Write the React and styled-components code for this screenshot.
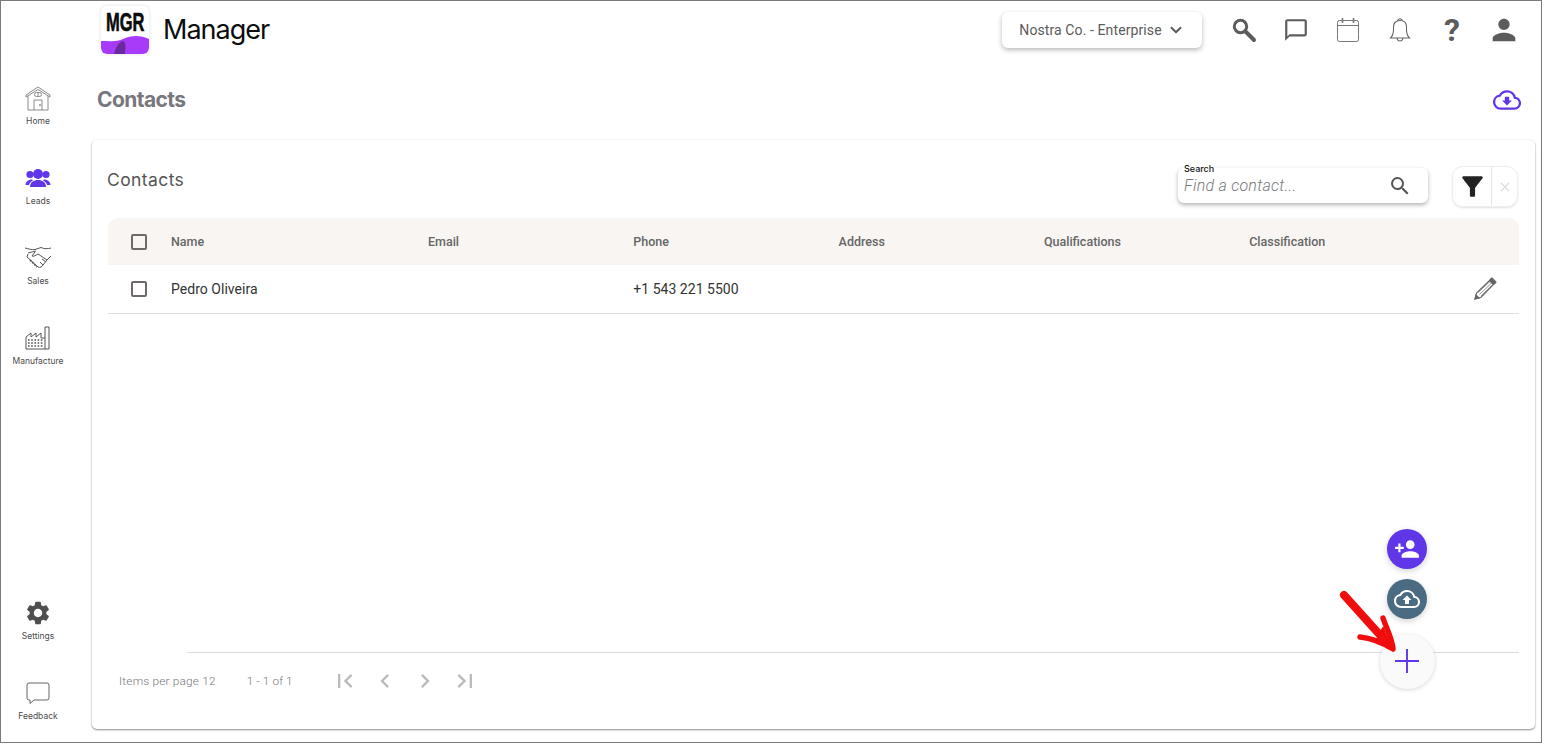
import React from 'react';
import styled, { createGlobalStyle } from 'styled-components';
import { ChevronDown } from 'lucide-react';
import {
  MdSettings, MdFilterAlt, MdClose, MdSearch, MdFirstPage, MdLastPage,
  MdChevronLeft, MdChevronRight, MdPerson,
  MdOutlineChatBubbleOutline, MdPersonAddAlt1,
} from 'react-icons/md';

const Global = createGlobalStyle`
  html, body { margin: 0; padding: 0; background: #fff; }
  body { font-family: Roboto, "Liberation Sans", sans-serif; overflow: hidden; }
  * { box-sizing: border-box; }
`;

const Frame = styled.div`
  position: relative;
  width: 1542px;
  height: 743px;
  border: 1px solid #7b7b7b;
  background: #fff;
  display: grid;
  grid-template-columns: 90px 1fr;
  overflow: hidden;
`;

const Sidebar = styled.nav`
  display: flex;
  flex-direction: column;
  justify-content: space-between;
  padding: 83px 0 20px;
`;

const NavGroup = styled.div`
  display: flex;
  flex-direction: column;
  gap: 37px;
`;

const NavItem = styled.div`
  width: 74px;
  height: 43px;
  display: flex;
  flex-direction: column;
  align-items: center;
  justify-content: space-between;
`;

const NavIcon = styled.div`
  height: 28px;
  display: flex;
  align-items: center;
  justify-content: center;
`;

const NavLabel = styled.span`
  font-family: Inter, "Liberation Sans", sans-serif;
  font-size: 8.5px;
  line-height: 12px;
  color: #4c4c4c;
  white-space: nowrap;
`;

const Main = styled.main`
  display: flex;
  flex-direction: column;
  min-width: 0;
`;

const Header = styled.header`
  height: 60px;
  display: flex;
  align-items: center;
  padding: 0 11px 2px 10px;
`;

const Logo = styled.div`
  width: 48px;
  height: 48px;
  border-radius: 6px;
  background: #fff;
  box-shadow: 0 0 4px rgba(0,0,0,.12);
  position: relative;
  overflow: hidden;
  display: flex;
  justify-content: center;
`;

const LogoText = styled.span`
  font-family: "Liberation Sans", sans-serif;
  font-weight: 700;
  font-size: 25px;
  line-height: 28px;
  margin: 2px 0 0 1px;
  color: #0c0c0c;
  -webkit-text-stroke: .6px #0c0c0c;
  transform: scaleX(.66);
`;

const LogoWave = styled.svg`
  position: absolute;
  left: 0;
  bottom: 0;
`;

const Brand = styled.span`
  font-family: Inter, "Liberation Sans", sans-serif;
  font-size: 27px;
  letter-spacing: -1px;
  color: #0c0c0c;
  margin: 0 0 1px 14px;
`;

const Spacer = styled.div`flex: 1;`;

const CompanySelect = styled.div`
  width: 200px;
  height: 36px;
  display: flex;
  align-items: center;
  justify-content: center;
  gap: 5px;
  border-radius: 6px;
  background: #fff;
  font-size: 14px;
  letter-spacing: .1px;
  color: #5b5b5b;
  box-shadow: 0 2px 5px rgba(0,0,0,.28);
`;

const HeaderIcons = styled.div`
  display: flex;
  align-items: center;
  margin-left: 16px;
  color: #5c5c5c;
`;

const HeaderIcon = styled.div`
  width: 52px;
  height: 36px;
  display: flex;
  align-items: center;
  justify-content: center;
`;

const QuestionGlyph = styled.span`
  font-family: Roboto, "Liberation Sans", sans-serif;
  font-size: 32px;
  font-weight: 700;
  line-height: 36px;
  color: #5c5c5c;
`;

const TitleRow = styled.div`
  height: 79px;
  display: flex;
  align-items: center;
  justify-content: space-between;
  padding: 0 20px 2px 6px;
`;

const PageTitle = styled.h1`
  margin: 0;
  font-family: Inter, "Liberation Sans", sans-serif;
  font-size: 21px;
  font-weight: 700;
  letter-spacing: -.6px;
  color: #77777d;
`;

const Card = styled.section`
  width: 1443px;
  height: 589px;
  margin-left: 1px;
  border-radius: 5px;
  background: #fff;
  box-shadow: 0 1px 2px rgba(0,0,0,.45), 0 0 2px rgba(0,0,0,.06);
  padding: 26px 16px 0;
  display: flex;
  flex-direction: column;
`;

const CardTop = styled.div`
  height: 52px;
  display: flex;
  align-items: flex-start;
`;

const CardTitle = styled.h2`
  margin: 3px 0 0 -1px;
  font-family: Inter, "Liberation Sans", sans-serif;
  font-size: 17.5px;
  font-weight: 400;
  line-height: 22px;
  letter-spacing: .4px;
  color: #555;
`;

const SearchBox = styled.div`
  position: relative;
  width: 250px;
  height: 35px;
  margin-top: 2px;
  border-radius: 6px;
  background: #fff;
  box-shadow: 0 2px 4px rgba(0,0,0,.3);
  display: flex;
  align-items: center;
  justify-content: space-between;
  padding: 0 16px 0 6px;
  color: #555;
`;

const SearchLabel = styled.span`
  position: absolute;
  top: -5px;
  left: 6px;
  font-family: Inter, "Liberation Sans", sans-serif;
  font-size: 9px;
  font-weight: 500;
  line-height: 11px;
  color: #111;
  background: #fff;
`;

const SearchHint = styled.span`
  font-size: 16px;
  font-style: italic;
  font-weight: 300;
  letter-spacing: .25px;
  color: #777;
`;

const FilterGroup = styled.div`
  width: 66px;
  height: 41px;
  margin-left: 24px;
  margin-right: 1px;
  border: 1px solid #eee;
  border-radius: 11px;
  box-shadow: 0 1px 2px rgba(0,0,0,.12);
  display: flex;
`;

const FilterCell = styled.div`
  flex: ${p => p.$grow || 1};
  display: flex;
  align-items: center;
  justify-content: center;
  color: ${p => p.$color};
  & + & { border-left: 1px solid #e6e6e6; }
`;

const Row = styled.div`
  height: ${p => p.$head ? 47 : 49}px;
  display: grid;
  grid-template-columns: 63px 257px repeat(5, 205.3px) 1fr;
  align-items: center;
  background: ${p => p.$head ? '#f8f5f2' : '#fff'};
  border-radius: ${p => p.$head ? '10px 10px 0 0' : 0};
  border-bottom: ${p => p.$head ? 'none' : '1px solid #dfdfdf'};
  line-height: 16px;
  color: ${p => p.$head ? '#666' : '#333'};
  font-weight: ${p => p.$head ? 500 : 400};
  font-size: ${p => p.$head ? '12.5px' : '14px'};
  letter-spacing: ${p => p.$head ? 0 : '.03px'};
`;

const Check = styled.span`
  display: block;
  width: 16px;
  height: 16px;
  margin-left: 23px;
  border: 2px solid #6f6a67;
  border-radius: 2px;
`;

const EditCell = styled.div`
  display: flex;
  justify-content: flex-end;
  padding-right: 22px;
  color: #666;
`;

const Grow = styled.div`flex: 1;`;

const Footer = styled.footer`
  margin-left: 79px;
  height: 77px;
  border-top: 1px solid #dcdcdc;
`;

const Pager = styled.div`
  margin-left: -68px;
  height: 56px;
  display: flex;
  align-items: center;
  font-size: 11.8px;
  font-weight: 300;
  letter-spacing: .2px;
  color: #777;
`;

const PageCount = styled.span`
  margin-left: 31px;
  letter-spacing: .1px;
`;

const PageButtons = styled.div`
  display: flex;
  margin-left: 32px;
  color: #bbb;
`;

const PageButton = styled.div`
  width: 40px;
  height: 24px;
  display: flex;
  align-items: center;
  justify-content: center;
`;

const Fab = styled.div`
  position: absolute;
  left: ${p => p.$x - p.$size / 2 - 1}px;
  top: ${p => p.$y - p.$size / 2 - 1}px;
  width: ${p => p.$size}px;
  height: ${p => p.$size}px;
  border-radius: 50%;
  background: ${p => p.$bg};
  color: ${p => p.$color};
  box-shadow: ${p => p.$soft ? '0 1px 4px rgba(0,0,0,.16)' : '0 2px 6px rgba(0,0,0,.18)'};
  display: flex;
  align-items: center;
  justify-content: center;
`;

const Mirrored = styled.span`
  display: flex;
  transform: scaleX(-1);
`;

const Arrow = styled.svg`
  position: absolute;
  left: 1335px;
  top: 587px;
`;

const House = () => (
  <svg width="26" height="26" viewBox="0 0 26 26" fill="none" stroke="#8a8a8a" strokeWidth="1">
    <path d="M1 10 L13 2 L25 10 V12 L13 4.5 L1 12 Z" />
    <path d="M3 11 V25 H23 V11" />
    <path d="M9 25 V15 H17 V25" />
    <rect x="9.5" y="7.5" width="7" height="4" rx="2" />
    <path d="M13 7.5 V11.5" />
    <circle cx="15" cy="20" r=".6" fill="#8a8a8a" />
  </svg>
);

const GroupIcon = () => (
  <svg width="26" height="20" viewBox="0 0 26 20" fill="#5f36e8">
    <circle cx="13" cy="6" r="5" />
    <circle cx="5" cy="6.5" r="3.6" />
    <circle cx="21" cy="6.5" r="3.6" />
    <path d="M5 19 C5 14 9 12 13 12 C17 12 21 14 21 19 Z" />
    <path d="M0.5 17 C0.5 14 3 11.5 7 11.5 L8 12.5 C6 13.5 4.5 15 4 17 Z" />
    <path d="M25.5 17 C25.5 14 23 11.5 19 11.5 L18 12.5 C20 13.5 21.5 15 22 17 Z" />
  </svg>
);

const Hands = () => (
  <svg width="28" height="26" viewBox="0 0 28 26" fill="none" stroke="#555" strokeWidth="1">
    <path d="M1 3 C5 4 8 5 11 4.5 L17 2.5 C20 4 24 4 27 3" />
    <path d="M4 8 L12 6 M11 7 L8 11 C10 12 12 10 14 9 L23 15 L27 11" />
    <path d="M4 9 L3 12 L14 22 C16 23 18 22 19 20 L23 15" />
    <path strokeWidth="1.6" strokeDasharray="2 1" d="M6 15 L13 22" />
    <path d="M16 17 L19 20 M18 14 L22 17" />
  </svg>
);

const Factory = () => (
  <svg width="26" height="26" viewBox="0 0 26 26" fill="none" stroke="#555" strokeWidth="1">
    <path d="M1 24 V12 L6 8 V12 L11 8 V12 L16 8 V13 H20 V2 H24 V24 Z" />
    <path d="M20 13 V24" />
    <path strokeWidth="1.4" strokeDasharray="1.6 1.6" d="M3 15 H18 M3 18 H18 M3 21 H18" />
  </svg>
);

const FeedbackIcon = () => (
  <svg width="24" height="24" viewBox="0 0 24 24" fill="none" stroke="#666" strokeWidth="1">
    <path d="M3 2 H21 Q23 2 23 4 V17 Q23 19 21 19 H8 L4 22.5 V19 H3 Q1 19 1 17 V4 Q1 2 3 2 Z" />
  </svg>
);

const BigSearch = () => (
  <svg width="26" height="26" viewBox="0 0 26 26" fill="none" stroke="#5c5c5c">
    <circle cx="9.5" cy="9.5" r="6.2" strokeWidth="3" />
    <path d="M14.5 14.5 L23 23" strokeWidth="4" strokeLinecap="round" />
  </svg>
);

const CalendarIcon = () => (
  <svg width="24" height="26" viewBox="0 0 24 26" fill="none" stroke="#777" strokeWidth="1">
    <rect x="1.5" y="3.5" width="21" height="21" rx="2" />
    <path d="M1.5 8.5 H22.5" />
    <path strokeWidth="1.6" d="M6.5 1 V6 M17.5 1 V6" />
  </svg>
);

const BellIcon = () => (
  <svg width="22" height="26" viewBox="0 0 22 26" fill="none" stroke="#666" strokeWidth="1.1">
    <path d="M1.5 21 C3.5 19 4.5 17 4.5 13 V10 C4.5 6 7 3.5 11 3.5 C15 3.5 17.5 6 17.5 10 V13 C17.5 17 18.5 19 20.5 21 Z" />
    <path d="M8.5 3.8 C9 1 13 1 13.5 3.8" />
    <path d="M8 21 C8.5 25 13.5 25 14 21" />
  </svg>
);

const Pencil = () => (
  <svg width="24" height="24" viewBox="0 0 24 24" fill="none" stroke="#666" strokeWidth="1.1">
    <path d="M2 22 L3.5 16 L16.5 3.5 L20.5 7.5 L7.8 20.5 Z" />
    <path d="M5 15.5 L17 4.5 M6.5 17.5 L18.5 6 M8 19 L20 7.5" strokeWidth=".7" />
    <path d="M18 1.5 L19 1 L23 5 L22.5 6 L20.5 7.5 L16.5 3.5 Z" fill="#666" />
    <path d="M2 22 L3 18 L6 21 Z" fill="#666" />
  </svg>
);

const ThinPlus = () => (
  <svg width="26" height="26" viewBox="0 0 26 26" fill="none" stroke="#5f36e8" strokeWidth="1.9">
    <path d="M13 1 V25 M1 13 H25" />
  </svg>
);

const CLOUD = 'M19.35 10.04C18.67 6.59 15.64 4 12 4 9.11 4 6.6 5.64 5.35 8.04 2.34 8.36 0 10.91 0 14c0 3.31 2.69 6 6 6h13c2.76 0 5-2.24 5-5 0-2.64-2.05-4.78-4.65-4.96z';

const CloudIcon = ({ size, color, up }) => (
  <svg width={size} height={size} viewBox="-1 -1 26 26">
    <path d={CLOUD} fill="none" stroke={color} strokeWidth="2.1" />
    <path d={up ? 'M12 8.5 L16.5 13 H14 V17 H10 V13 H7.5 Z' : 'M12 17 L16.5 12.5 H14 V9 H10 V12.5 H7.5 Z'} fill={color} />
  </svg>
);

const navTop = [
  { label: 'Home', icon: <House /> },
  { label: 'Leads', icon: <GroupIcon /> },
  { label: 'Sales', icon: <Hands /> },
  { label: 'Manufacture', icon: <Factory /> },
];
const navBottom = [
  { label: 'Settings', icon: <MdSettings size={28} color="#4f4f4f" /> },
  { label: 'Feedback', icon: <FeedbackIcon /> },
];
const heads = ['Name', 'Email', 'Phone', 'Address', 'Qualifications', 'Classification'];

const Nav = ({ items }) => (
  <NavGroup>
    {items.map(i => (
      <NavItem key={i.label}>
        <NavIcon>{i.icon}</NavIcon>
        <NavLabel>{i.label}</NavLabel>
      </NavItem>
    ))}
  </NavGroup>
);

export default function App() {
  return (
    <Frame>
      <Global />
      <Sidebar>
        <Nav items={navTop} />
        <Nav items={navBottom} />
      </Sidebar>
      <Main>
        <Header>
          <Logo>
            <LogoText>MGR</LogoText>
            <LogoWave width="48" height="48" viewBox="0 0 48 48">
              <path d="M0 35 C10 35 16 36 22 33 C30 29 40 29 48 33 V42 Q48 48 42 48 H6 Q0 48 0 42 Z" fill="#a83bfa" />
              <path d="M13 48 C15 40 18 36 22 35 C26 36 24 44 24 48 Z" fill="#6a2a9e" />
            </LogoWave>
          </Logo>
          <Brand>Manager</Brand>
          <Spacer />
          <CompanySelect>
            Nostra Co. - Enterprise
            <ChevronDown size={18} strokeWidth={2.6} />
          </CompanySelect>
          <HeaderIcons>
            <HeaderIcon><BigSearch /></HeaderIcon>
            <HeaderIcon><MdOutlineChatBubbleOutline size={26} /></HeaderIcon>
            <HeaderIcon><CalendarIcon /></HeaderIcon>
            <HeaderIcon><BellIcon /></HeaderIcon>
            <HeaderIcon><QuestionGlyph>?</QuestionGlyph></HeaderIcon>
            <HeaderIcon><MdPerson size={34} /></HeaderIcon>
          </HeaderIcons>
        </Header>
        <TitleRow>
          <PageTitle>Contacts</PageTitle>
          <CloudIcon size={28} color="#5f36e8" />
        </TitleRow>
        <Card>
          <CardTop>
            <CardTitle>Contacts</CardTitle>
            <Spacer />
            <SearchBox>
              <SearchLabel>Search</SearchLabel>
              <SearchHint>Find a contact...</SearchHint>
              <MdSearch size={24} />
            </SearchBox>
            <FilterGroup>
              <FilterCell $grow={40} $color="#222"><MdFilterAlt size={31} /></FilterCell>
              <FilterCell $grow={26} $color="#ddd"><MdClose size={16} /></FilterCell>
            </FilterGroup>
          </CardTop>
          <Row $head>
            <Check />
            {heads.map(h => <span key={h}>{h}</span>)}
          </Row>
          <Row>
            <Check />
            <span>Pedro Oliveira</span>
            <span />
            <span>+1 543 221 5500</span>
            <span />
            <span />
            <span />
            <EditCell><Pencil /></EditCell>
          </Row>
          <Grow />
          <Footer>
            <Pager>
              Items per page 12
              <PageCount>1 - 1 of 1</PageCount>
              <PageButtons>
                <PageButton><MdFirstPage size={28} /></PageButton>
                <PageButton><MdChevronLeft size={28} /></PageButton>
                <PageButton><MdChevronRight size={28} /></PageButton>
                <PageButton><MdLastPage size={28} /></PageButton>
              </PageButtons>
            </Pager>
          </Footer>
        </Card>
      </Main>
      <Fab $x={1407} $y={549} $size={40} $bg="#5f36e8" $color="#fff"><Mirrored><MdPersonAddAlt1 size={26} /></Mirrored></Fab>
      <Fab $x={1407} $y={599} $size={40} $bg="#4a6b82" $color="#fff"><CloudIcon size={26} color="#fff" up /></Fab>
      <Fab $x={1407} $y={661} $size={55} $bg="#fafafa" $color="#5f36e8" $soft><ThinPlus /></Fab>
      <Arrow width="70" height="70" viewBox="0 0 70 70" fill="#f00d0d" stroke="#f00d0d" strokeLinecap="round" strokeLinejoin="round">
        <path d="M8 7 L53 57" strokeWidth="8" fill="none" />
        <path d="M24 49 C34 50 44 53 57 61 C56 50 51 42 47 30" strokeWidth="5.5" fill="none" />
        <path d="M42 50 L47 40 L54 58 Z" strokeWidth="2" />
      </Arrow>
    </Frame>
  );
}
